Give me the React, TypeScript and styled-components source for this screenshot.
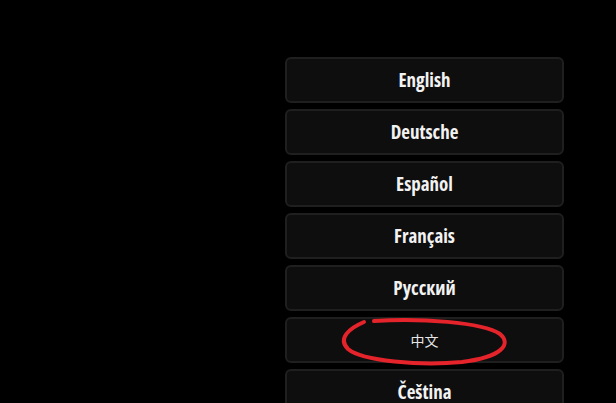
import styled, { createGlobalStyle } from 'styled-components'

const Global = createGlobalStyle`
  html, body {
    margin: 0;
    padding: 0;
    background: #000;
    overflow: hidden;
  }
`

const Screen = styled.main`
  position: relative;
  width: 616px;
  height: 403px;
  background: #000;
  display: flex;
  justify-content: flex-end;
  padding: 57px 52px 0 0;
  box-sizing: border-box;
  overflow: hidden;
`

const LangList = styled.div`
  display: flex;
  flex-direction: column;
  gap: 6px;
  width: 279px;
`

const LangButton = styled.button<{ $cjk?: boolean }>`
  height: 46px;
  flex: none;
  box-sizing: border-box;
  background: #0e0e0e;
  border: 2px solid #1f1f1f;
  border-radius: 6px;
  color: ${p => (p.$cjk ? '#e6e6e6' : '#f2f2f2')};
  font-family: ${p =>
    p.$cjk
      ? '"Noto Sans CJK SC", "Noto Sans", sans-serif'
      : '"Open Sans", sans-serif'};
  font-weight: ${p => (p.$cjk ? 400 : 700)};
  font-stretch: 75%;
  font-size: ${p => (p.$cjk ? '14px' : '19px')};
  padding: 0;
  display: flex;
  align-items: center;
  justify-content: center;
`

const Scribble = styled.svg`
  position: absolute;
  left: 0;
  top: 0;
  pointer-events: none;
`

const languages = ['English', 'Deutsche', 'Español', 'Français', 'Русский', '中文', 'Čeština']

export default function App() {
  return (
    <>
      <Global />
      <Screen>
        <LangList>
          {languages.map(l => (
            <LangButton key={l} $cjk={l === '中文'}>
              {l}
            </LangButton>
          ))}
        </LangList>
        <Scribble width="616" height="403" viewBox="0 0 616 403">
          <path
            d="M374 321 C 420 318, 482 322, 500 334 C 512 344, 502 357, 462 362 C 420 366, 362 361, 348 349 C 337 338, 350 328, 364 322"
            fill="none"
            stroke="#e5232a"
            strokeWidth="4"
            strokeLinecap="round"
          />
        </Scribble>
      </Screen>
    </>
  )
}
